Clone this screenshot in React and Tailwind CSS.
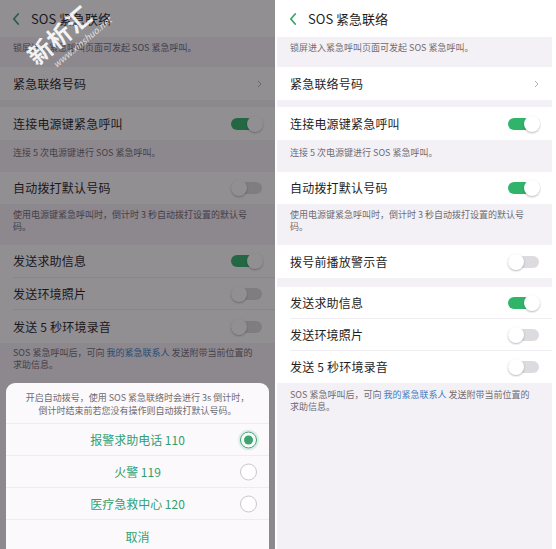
import React from "react";
import clsx from "clsx";

const GREEN = "text-[#33a06c]";

const Toggle = ({ on }) => (
  <div className="relative w-[32px] h-[16px] shrink-0">
    <div
      className={clsx(
        "absolute left-0 right-[1px] top-[2px] bottom-[2px] rounded-full",
        on ? "bg-[#2fb46a]" : "bg-[#dddbdf]"
      )}
    />
    <div
      className={clsx(
        "absolute top-0 w-[16px] h-[16px] rounded-full bg-white shadow-[0_1px_2px_rgba(0,0,0,0.28)]",
        on ? "right-0" : "left-0"
      )}
    />
  </div>
);

const Row = ({ label, h, border, children }) => (
  <div className="bg-white pl-[13px]">
    <div
      className={clsx(
        "flex items-center justify-between pr-[12px]",
        h,
        border && "border-b border-[#efedf1]"
      )}
    >
      <span className="text-[12px] text-[#1e1e1e] tracking-[0.2px]">{label}</span>
      {children}
    </div>
  </div>
);

const Desc = ({ h, pt, children }) => (
  <div className={clsx("bg-[#f4f1f6] px-[13px] text-[9px] leading-[11.5px] text-[#6e6b70]", h, pt)}>
    {children}
  </div>
);

const Settings = ({ withAlert }) => (
  <div className="flex flex-col h-full bg-[#f4f1f6]">
    {/* Header */}
    <div className="h-[37px] bg-white flex items-center pl-[12px]">
      <svg width="8" height="12" viewBox="0 0 8 12" fill="none">
        <path d="M6.2 1 L1.8 6 L6.2 11" stroke="#3aa56f" strokeWidth="1.8" strokeLinecap="round" strokeLinejoin="round" />
      </svg>
      <span className="ml-[11px] text-[13px] text-[#1e1e1e]">SOS 紧急联络</span>
    </div>

    <Desc h="h-[30px]" pt="pt-[5px]">锁屏进入紧急呼叫页面可发起 SOS 紧急呼叫。</Desc>

    <Row label="紧急联络号码" h="h-[33px]">
      <svg width="5" height="8" viewBox="0 0 5 8" fill="none" className="mr-[1px]">
        <path d="M1 1 L4 4 L1 7" stroke="#b3b0b5" strokeWidth="1" />
      </svg>
    </Row>

    <div className="h-[7px]" />

    <Row label="连接电源键紧急呼叫" h="h-[33px]">
      <Toggle on />
    </Row>
    <Desc h="h-[32px]" pt="pt-[7px]">连接 5 次电源键进行 SOS 紧急呼叫。</Desc>

    <Row label="自动拨打默认号码" h="h-[32px]">
      <Toggle on={withAlert} />
    </Row>
    <Desc h="h-[41px]" pt="pt-[5px]">
      使用电源键紧急呼叫时，倒计时 3 秒自动拨打设置的默认号
      <br />
      码。
    </Desc>

    {withAlert && (
      <>
        <Row label="拨号前播放警示音" h="h-[33px]">
          <Toggle />
        </Row>
        <div className="h-[9px]" />
      </>
    )}

    <Row label="发送求助信息" h={withAlert ? "h-[32px]" : "h-[33px]"} border>
      <Toggle on />
    </Row>
    <Row label="发送环境照片" h="h-[32px]" border>
      <Toggle />
    </Row>
    <Row label="发送 5 秒环境录音" h={withAlert ? "h-[32px]" : "h-[33px]"}>
      <Toggle />
    </Row>
    <Desc h="h-auto" pt={withAlert ? "pt-[6px]" : "pt-[4px]"}>
      SOS 紧急呼叫后，可向 <span className="text-[#3b7fc4]">我的紧急联系人</span> 发送附带当前位置的
      <br />
      求助信息。
    </Desc>
  </div>
);

const Radio = ({ checked }) =>
  checked ? (
    <div className="w-[17px] h-[17px] rounded-full border-[1.5px] border-[#3aa56f] flex items-center justify-center shadow-[0_0_0_2px_rgba(58,165,111,0.15)]">
      <div className="w-[9px] h-[9px] rounded-full bg-[#3aa56f]" />
    </div>
  ) : (
    <div className="w-[17px] h-[17px] rounded-full border border-[#c9c6cb] bg-white" />
  );

const Option = ({ label, checked }) => (
  <div className="relative h-[32px] flex items-center justify-center border-b border-[#eeecf0]">
    <span className={clsx("text-[12px]", GREEN)}>{label}</span>
    <div className="absolute right-[12px] top-1/2 -translate-y-1/2">
      <Radio checked={checked} />
    </div>
  </div>
);

export default function App() {
  return (
    <div
      className="w-[556px] h-[549px] overflow-hidden bg-white flex"
      style={{ fontFamily: '"Noto Sans CJK SC", "Noto Sans", sans-serif' }}
    >
      {/* Left screen with dialog */}
      <div className="relative w-[275px] h-full overflow-hidden">
        <Settings />
        <div className="absolute inset-0 bg-[#17121a]/[0.47]" />

        {/* watermark */}
        <div className="absolute left-[38px] top-[58px] w-[120px] h-[20px] -rotate-[40deg] origin-left text-white/90 pointer-events-none">
          <div className="absolute left-0 top-[-14px] text-[24px] font-bold leading-none tracking-[1px] whitespace-nowrap">新析汇</div>
          <div className="absolute left-[14px] top-[14px] text-[9px] italic leading-none whitespace-nowrap text-white/75">www.xinshuo.net</div>
        </div>

        <div className="absolute left-[6px] right-[6px] top-[383px] bottom-0 bg-[#fbf9fc] rounded-t-[9px]">
          <div className="pt-[8px] pb-[6px] text-center text-[9px] leading-[13px] text-[#6e6b70]">
            开启自动拨号，使用 SOS 紧急联络时会进行 3s 倒计时，
            <br />
            倒计时结束前若您没有操作则自动拨打默认号码。
          </div>
          <div className="border-b border-[#eeecf0]" />
          <Option label="报警求助电话 110" checked />
          <Option label="火警 119" />
          <Option label="医疗急救中心 120" />
          <div className="h-[34px] flex items-center justify-center">
            <span className={clsx("text-[12px]", GREEN)}>取消</span>
          </div>
        </div>
      </div>

      <div className="w-[2px]" />

      {/* Right screen */}
      <div className="w-[275px] h-full overflow-hidden">
        <Settings withAlert />
      </div>
    </div>
  );
}
